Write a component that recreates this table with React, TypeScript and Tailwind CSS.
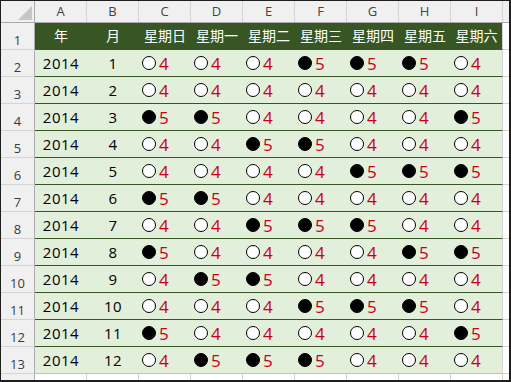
import React from "react";

const letters = ["A", "B", "C", "D", "E", "F", "G", "H", "I"];
const headers = ["年", "月", "星期日", "星期一", "星期二", "星期三", "星期四", "星期五", "星期六"];
const data: number[][] = [
  [4, 4, 4, 5, 5, 5, 4],
  [4, 4, 4, 4, 4, 4, 4],
  [5, 5, 4, 4, 4, 4, 5],
  [4, 4, 5, 5, 4, 4, 4],
  [4, 4, 4, 4, 5, 5, 5],
  [5, 5, 4, 4, 4, 4, 4],
  [4, 4, 5, 5, 5, 4, 4],
  [5, 4, 4, 4, 4, 5, 5],
  [4, 5, 5, 4, 4, 4, 4],
  [4, 4, 4, 5, 5, 5, 4],
  [5, 4, 4, 4, 4, 4, 5],
  [4, 5, 5, 5, 4, 4, 4],
];

function RowHead({ n }: { n: number }) {
  return (
    <div className="w-[34px] shrink-0 bg-[#f0f0f0] border-r border-b border-r-[#ababab] border-b-[#d4d4d4] flex items-end justify-center pb-[2px] text-[13px] leading-none text-[#3a3a44]">
      {n}
    </div>
  );
}

function DayCell({ v }: { v: number }) {
  const filled = v === 5;
  return (
    <div className="w-[52px] shrink-0 flex items-center pl-[3px]">
      <span
        className={
          filled
            ? "w-[14px] h-[14px] rounded-full bg-black border-[1.5px] border-black"
            : "w-[14px] h-[14px] rounded-full bg-white border-[1.5px] border-black"
        }
      />
      <span className="ml-[3px] text-[17px] leading-none text-[#c8001e]">{v}</span>
    </div>
  );
}

export default function App() {
  return (
    <div className="w-[511px] h-[382px] overflow-hidden bg-white border-t border-l border-r-2 border-b-2 border-[#1e1e1e] font-['Open_Sans','Noto_Sans_CJK_TC',sans-serif]">
      {/* column letters */}
      <div className="flex h-[22px] bg-[#f0f0f0] border-b border-[#ababab]">
        <div className="w-[34px] shrink-0 border-r border-[#ababab] relative">
          <svg className="absolute right-[2px] bottom-[2px]" width="14" height="14" viewBox="0 0 14 14">
            <polygon points="14,0 14,14 0,14" fill="#c6c6c6" />
          </svg>
        </div>
        {letters.map((l) => (
          <div
            key={l}
            className="w-[52px] shrink-0 border-r border-[#d4d4d4] flex items-center justify-center text-[13px] leading-none text-[#444]"
          >
            {l}
          </div>
        ))}
        <div className="flex-1" />
      </div>

      {/* row 1: green header */}
      <div className="flex h-[27px]">
        <RowHead n={1} />
        <div className="w-[468px] shrink-0 flex bg-[#375623] border-b border-r border-b-[#375623] border-r-[#d4d4d4] font-['Noto_Sans_CJK_TC',sans-serif] text-[14px] leading-none text-white">
          {headers.map((h, i) => (
            <div key={h} className={i === 8 ? "flex-1 flex items-center justify-center pb-[2px]" : "w-[52px] shrink-0 flex items-center justify-center pb-[2px]"}>
              {h}
            </div>
          ))}
        </div>
        <div className="flex-1 border-b border-[#d4d4d4]" />
      </div>

      {/* data rows */}
      {data.map((row, idx) => (
        <div key={idx} className="flex h-[27px]">
          <RowHead n={idx + 2} />
          <div
            className={
              idx === 11
                ? "w-[468px] shrink-0 flex bg-[#e2efda] border-b border-r border-b-[#b8c4b0] border-r-[#d4d4d4]"
                : "w-[468px] shrink-0 flex bg-[#e2efda] border-b border-r border-b-[#375623] border-r-[#d4d4d4]"
            }
          >
            <div className="w-[52px] shrink-0 flex items-center justify-center text-[15px] tracking-[0.5px] leading-none text-black">
              2014
            </div>
            <div className="w-[52px] shrink-0 flex items-center justify-center text-[15px] tracking-[0.5px] leading-none text-black">
              {idx + 1}
            </div>
            {row.map((v, j) => (
              <DayCell key={j} v={v} />
            ))}
          </div>
          <div className="flex-1 border-b border-[#d4d4d4]" />
        </div>
      ))}

      {/* partial row 14 */}
      <div className="flex h-[6px]">
        <div className="w-[34px] shrink-0 bg-[#f0f0f0] border-r border-[#ababab]" />
        {letters.map((l) => (
          <div key={l} className="w-[52px] shrink-0 border-r border-[#d4d4d4]" />
        ))}
        <div className="flex-1" />
      </div>
    </div>
  );
}
